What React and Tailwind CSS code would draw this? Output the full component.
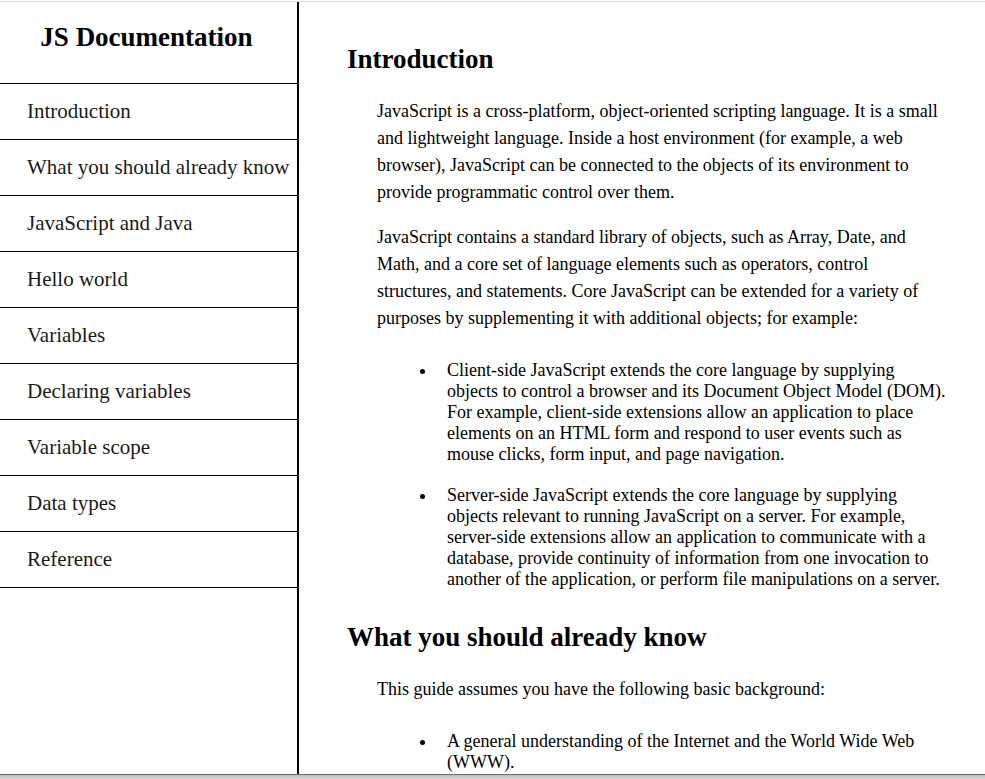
const links = [
  ["Introduction", "introduction"],
  ["What you should already know", "already-know"],
  ["JavaScript and Java", "javascript-and-java"],
  ["Hello world", "hello-world"],
  ["Variables", "variables"],
  ["Declaring variables", "declaring-variables"],
  ["Variable scope", "variable-scope"],
  ["Data types", "data-types"],
  ["Reference", "reference"],
];

function Section({ id, title, children }) {
  return (
    <section id={id} className="mb-[31px]">
      <h2 className="mb-[23px] text-[27px] leading-8 font-bold">{title}</h2>
      {children}
    </section>
  );
}

function Paragraph({ children }) {
  return <p className="mb-[18px] ml-[30px] text-lg leading-[27px]">{children}</p>;
}

function Bullets({ items }) {
  return (
    <ul className="mt-7 ml-[90px] list-disc text-lg leading-[21px]">
      {items.map((item) => (
        <li key={item} className="mb-5 pl-2.5">{item}</li>
      ))}
    </ul>
  );
}

export default function App() {
  return (
    <div className="flex h-screen flex-col overflow-hidden bg-white pt-px font-['Liberation_Serif','Times_New_Roman',serif] text-black">
      <div className="flex min-h-0 flex-1 border-t border-[#d5d8d5]">
        <nav id="navbar" className="w-[299px] shrink-0 border-r-2 border-black">
          <header className="border-b border-black pt-[19px] pb-[30px] text-center text-[27px] leading-8 font-bold">
            <h1 className="pr-1">JS Documentation</h1>
          </header>
          <ul>
            {links.map(([label, id]) => (
              <li key={id} className="border-b border-black">
                <a href={"#" + id} className="block pl-[27px] text-[21px] leading-[55px] whitespace-nowrap text-[#1a1a1a]">{label}</a>
              </li>
            ))}
          </ul>
        </nav>
        <main className="min-w-0 flex-1 overflow-hidden pt-[41px] pr-[38px] pl-12">
          <Section id="introduction" title="Introduction">
            <Paragraph>
              JavaScript is a cross-platform, object-oriented scripting language. It is a small and lightweight language. Inside a host environment (for example, a web browser), JavaScript can be connected to the objects of its environment to provide programmatic control over them.
            </Paragraph>
            <Paragraph>
              JavaScript contains a standard library of objects, such as Array, Date, and Math, and a core set of language elements such as operators, control structures, and statements. Core JavaScript can be extended for a variety of purposes by supplementing it with additional objects; for example:
            </Paragraph>
            <Bullets
              items={[
                "Client-side JavaScript extends the core language by supplying objects to control a browser and its Document Object Model (DOM). For example, client-side extensions allow an application to place elements on an HTML form and respond to user events such as mouse clicks, form input, and page navigation.",
                "Server-side JavaScript extends the core language by supplying objects relevant to running JavaScript on a server. For example, server-side extensions allow an application to communicate with a database, provide continuity of information from one invocation to another of the application, or perform file manipulations on a server.",
              ]}
            />
          </Section>
          <Section id="already-know" title="What you should already know">
            <Paragraph>This guide assumes you have the following basic background:</Paragraph>
            <Bullets items={["A general understanding of the Internet and the World Wide Web (WWW)."]} />
          </Section>
        </main>
      </div>
      <footer className="h-[5px] shrink-0 border-t border-[#6b6b6b] bg-linear-to-b from-[#bdbdbd] to-[#dcdcdc]" />
    </div>
  );
}
